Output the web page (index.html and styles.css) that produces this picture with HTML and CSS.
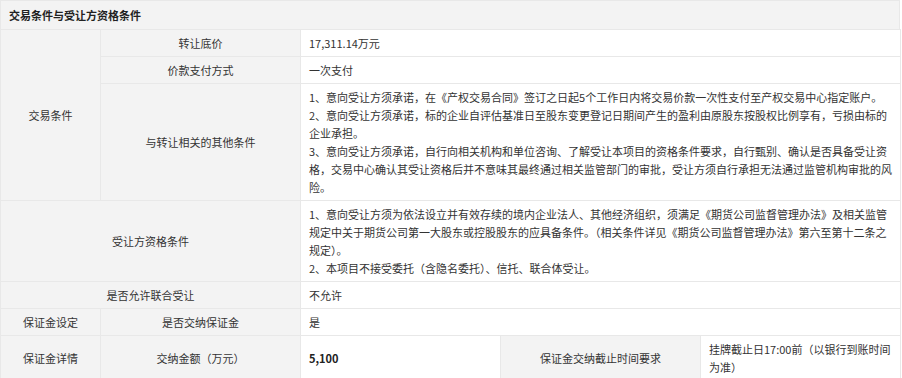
FILE: index.html
```html
<!DOCTYPE html>
<html lang="zh-CN">
<head>
<meta charset="utf-8">
<title>交易条件与受让方资格条件</title>
<link rel="stylesheet" href="styles.css">
</head>
<body>
<div class="panel">
  <div class="panel-title">交易条件与受让方资格条件</div>
  <table class="info">
    <colgroup>
      <col class="c1"><col class="c2"><col class="c3"><col class="c4"><col class="c5">
    </colgroup>
    <tbody>
      <tr>
        <th class="label" rowspan="3">交易条件</th>
        <th class="label">转让底价</th>
        <td class="value" colspan="3">17,311.14万元</td>
      </tr>
      <tr>
        <th class="label">价款支付方式</th>
        <td class="value" colspan="3">一次支付</td>
      </tr>
      <tr>
        <th class="label">与转让相关的其他条件</th>
        <td class="value" colspan="3">1、意向受让方须承诺，在《产权交易合同》签订之日起5个工作日内将交易价款一次性支付至产权交易中心指定账户。<br>2、意向受让方须承诺，标的企业自评估基准日至股东变更登记日期间产生的盈利由原股东按股权比例享有，亏损由标的企业承担。<br>3、意向受让方须承诺，自行向相关机构和单位咨询、了解受让本项目的资格条件要求，自行甄别、确认是否具备受让资格，交易中心确认其受让资格后并不意味其最终通过相关监管部门的审批，受让方须自行承担无法通过监管机构审批的风险。</td>
      </tr>
      <tr>
        <th class="label" colspan="2">受让方资格条件</th>
        <td class="value" colspan="3">1、意向受让方须为依法设立并有效存续的境内企业法人、其他经济组织，须满足《期货公司监督管理办法》及相关监管规定中关于期货公司第一大股东或控股股东的应具备条件。（相关条件详见《期货公司监督管理办法》第六至第十二条之规定）。<br>2、本项目不接受委托（含隐名委托）、信托、联合体受让。</td>
      </tr>
      <tr>
        <th class="label" colspan="2">是否允许联合受让</th>
        <td class="value" colspan="3">不允许</td>
      </tr>
      <tr>
        <th class="label">保证金设定</th>
        <th class="label">是否交纳保证金</th>
        <td class="value" colspan="3">是</td>
      </tr>
      <tr>
        <th class="label">保证金详情</th>
        <th class="label">交纳金额（万元）</th>
        <td class="value strong">5,100</td>
        <th class="label">保证金交纳截止时间要求</th>
        <td class="value">挂牌截止日17:00前（以银行到账时间为准）</td>
      </tr>
    </tbody>
  </table>
</div>
</body>
</html>
```

FILE: styles.css
```css
html, body {
  margin: 0;
  padding: 0;
  background: #ffffff;
}

body {
  font-family: "PingFang SC", "Noto Sans CJK SC", "Noto Sans", sans-serif;
  font-size: 11px;
  color: #333333;
}

.panel {
  width: 900px;
}

.panel-title {
  height: 28px;
  line-height: 28px;
  padding: 0 8px;
  background: #f3f3f3;
  border: 1px solid #e8e8e8;
  border-bottom: none;
  font-weight: 700;
  color: #222222;
}

.info {
  width: 900px;
  border-collapse: collapse;
  table-layout: fixed;
}

.info .c1 { width: 100px; }
.info .c2 { width: 200px; }
.info .c3 { width: 200px; }
.info .c4 { width: 200px; }
.info .c5 { width: 200px; }

.info th,
.info td {
  border: 1px solid #e8e8e8;
  padding: 4px 8px;
  line-height: 18px;
  vertical-align: middle;
}

.label {
  background: #f3f3f3;
  font-weight: 400;
  text-align: center;
  color: #333333;
}

.value {
  background: #ffffff;
  text-align: left;
}

.strong {
  font-weight: 600;
  color: #222222;
}
```
